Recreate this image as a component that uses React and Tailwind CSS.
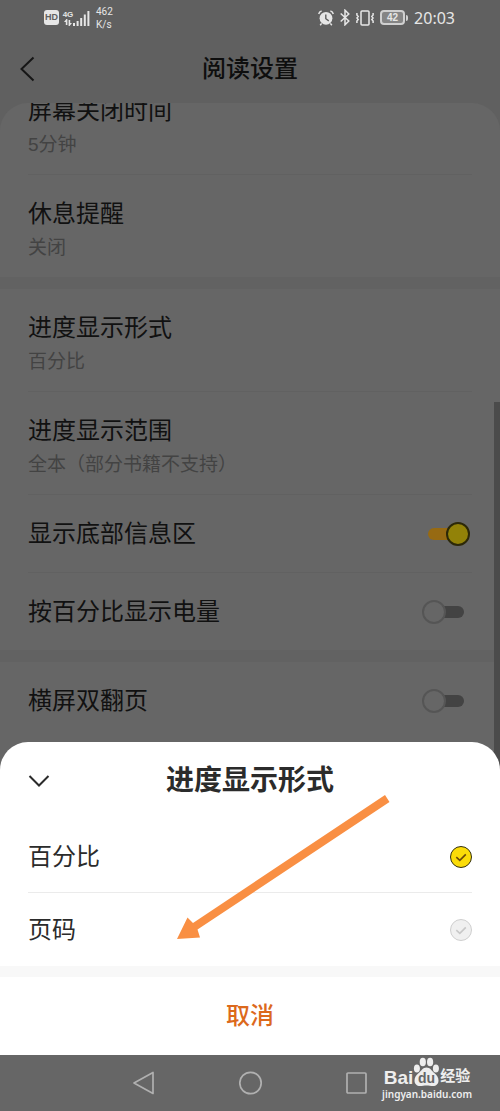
import React, { useState } from 'react';

const Divider = ({ thick }) => (
    <div className={thick ? 'h-3 bg-[#626262]' : 'mx-7 h-px bg-[#616161]'} />
);

const SettingLink = ({ title, value }) => (
    <button type="button" className="block w-full px-7 pt-[23px] pb-3 text-left">
        <span className="block text-2xl leading-8 text-[#111111]">{title}</span>
        <span className="block text-[19px] leading-[35px] text-[#434343]">{value}</span>
    </button>
);

const SettingSwitch = ({ title, defaultChecked = false }) => (
    <label className="flex h-[77px] items-center justify-between pl-7 pr-[30px]">
        <span className="text-2xl leading-8 text-[#111111]">{title}</span>
        <input
            type="checkbox"
            role="switch"
            defaultChecked={defaultChecked}
            className="relative h-6 w-12 appearance-none before:absolute before:inset-x-1.5 before:top-1.5 before:h-3 before:rounded-full before:bg-[#434343] after:absolute after:left-0 after:top-0 after:h-6 after:w-6 after:rounded-full after:border-2 after:border-[#555555] after:bg-[#666666] checked:before:bg-[#976a12] checked:after:left-6 checked:after:border-[#2c2808] checked:after:bg-[#928208]"
        />
    </label>
);

const Option = ({ label, checked, onChange }) => (
    <label className="flex h-[73px] items-center justify-between">
        <span className="text-2xl leading-8 text-[#2b2b2b]">{label}</span>
        <span className="grid h-[22px] w-[22px]">
            <input
                type="radio"
                name="progress"
                checked={checked}
                onChange={onChange}
                className="col-start-1 row-start-1 h-[22px] w-[22px] appearance-none rounded-full border border-[#cfcfcf] bg-[#f0f0f0] checked:border-[#33300f] checked:bg-[#fbdc08]"
            />
            <svg viewBox="0 0 22 22" className={`pointer-events-none col-start-1 row-start-1 ${checked ? 'text-[#6b4a0a]' : 'text-[#c8c8c8]'}`} fill="none" stroke="currentColor" strokeWidth="1.6">
                <path d="M6.3 11.2 9.8 14.4 15.8 8.4" />
            </svg>
        </span>
    </label>
);

const StatusBar = () => (
    <div className="flex h-[35px] items-center justify-between pl-11 pr-[45px] text-[#e6e6e6]">
        <div className="flex items-center">
            <span className="flex h-[15px] w-[15px] items-center justify-center rounded-[3px] bg-[#e6e6e6] text-[9px] font-bold text-[#606060]">HD</span>
            <div className="ml-1 flex items-end">
                <div className="flex w-[10px] flex-col items-center">
                    <span className="text-[8px] font-bold leading-[9px]">4G</span>
                    <svg width="8" height="7" viewBox="0 0 8 7" fill="currentColor">
                        <path d="M0 3 2.4 0H3.4V6H1.8V3ZM8 4 5.6 7H4.6V1H6.2V4Z" />
                    </svg>
                </div>
                <svg width="17" height="16" viewBox="0 0 17 16" fill="currentColor">
                    <path d="M0 13h2v3H0zM3.6 11h2v5h-2zM7.2 8h2v8h-2zM10.8 4.5h2V16h-2zM14.4 1h2v15h-2z" />
                </svg>
            </div>
            <div className="ml-1.5 font-['Roboto'] text-[10px] leading-[13px]">
                <div>462</div>
                <div>K/s</div>
            </div>
        </div>
        <div className="flex items-center">
            <svg width="16" height="16" viewBox="0 0 16 16">
                <circle cx="8" cy="8.3" r="6.4" fill="currentColor" />
                <path d="M.7 4A4 4 0 0 1 3.6 1M15.3 4a4 4 0 0 0-2.9-3M3.6 13.4 2.2 15.2M12.4 13.4l1.4 1.8" stroke="currentColor" strokeWidth="1.5" fill="none" />
                <path d="M7.8 4.5v4.2l3 2.2" stroke="#606060" strokeWidth="1.4" fill="none" />
            </svg>
            <svg className="ml-1.5" width="10" height="17" viewBox="0 0 10 17" fill="none" stroke="currentColor" strokeWidth="1.5">
                <path d="M.7 4.5 8.8 12 5 15.8V1.2L8.8 5 .7 12.5" />
            </svg>
            <svg className="ml-1.5" width="18" height="16" viewBox="0 0 18 16" fill="none" stroke="currentColor" strokeWidth="1.5">
                <rect x="5" y="1" width="8" height="14" rx="1" />
                <path d="M.9 3v2l1.300 1.500L.9 8l1.300 1.500L.9 11v2M17.100 3v2l-1.300 1.500L17.100 8l-1.300 1.500 1.300 1.500v2" />
            </svg>
            <div className="ml-1.5 flex h-[15px] w-[25px] items-center justify-center rounded-[4px] border-2 border-[#d0d0d0] bg-[#858585] text-[10px] font-bold leading-none">42</div>
            <div className="ml-px h-1.5 w-[2px] rounded-r bg-[#d0d0d0]" />
            <time className="ml-1.5 font-['Noto_Sans'] text-base leading-5">20:03</time>
        </div>
    </div>
);

const Watermark = () => (
    <div className="absolute right-7 top-0.5 flex flex-col items-center text-[#eeeeee]">
        <div className="flex h-[30px] items-end">
            <span className="text-[19px] font-bold leading-[18px]">Bai</span>
            <svg className="h-[30px] w-[27px]" viewBox="0 0 26 30" fill="currentColor">
                <ellipse cx="9.3" cy="5" rx="3.1" ry="4.300" />
                <ellipse cx="16.6" cy="5" rx="3.1" ry="4.300" />
                <ellipse cx="3.4" cy="11.5" rx="3" ry="3.900" />
                <ellipse cx="22.4" cy="11.5" rx="3" ry="3.900" />
                <path d="M13 10.500c3.600 0 5 3.200 7.500 5.300 2.800 2.300 4.500 4.400 4.500 7.700 0 3.600-2.400 5.500-5.500 5.500-2.300 0-4.200-.6-6.500-.6s-4.200.6-6.500.6C3.400 29 1 27.100 1 23.500c0-3.300 1.700-5.400 4.500-7.700C8 13.700 9.400 10.500 13 10.500Z" />
                <text x="13" y="26" textAnchor="middle" fontSize="14" fontWeight="700" fill="#666666">du</text>
            </svg>
            <span className="text-[15px] font-bold leading-[22px]">经验</span>
        </div>
        <span className="font-['Noto_Sans'] text-[10px] font-semibold leading-[14px]">jingyan.baidu.com</span>
    </div>
);

const App = () => {
    const [mode, setMode] = useState('percent');

    return (
        <div className="relative flex min-h-screen flex-col justify-between overflow-hidden bg-[#666666] font-['Liberation_Sans','Noto_Sans_CJK_SC',sans-serif]">
            {/* Dimmed settings page behind the sheet */}
            <div className="bg-[#606060]">
                <StatusBar />
                <header className="grid h-[68px] grid-cols-[1fr_auto_1fr] items-center px-5">
                    <button type="button" aria-label="返回" className="justify-self-start">
                        <svg width="15" height="26" viewBox="0 0 15 26" fill="none" stroke="#161616" strokeWidth="2">
                            <path d="M13.500 1.500 1.500 13 13.500 24.500" />
                        </svg>
                    </button>
                    <h1 className="text-2xl font-medium leading-8 text-[#0e0e0e]">阅读设置</h1>
                </header>
                <main className="overflow-hidden rounded-t-[28px] bg-[#666666]">
                    <div className="-mt-[31px]">
                        <SettingLink title="屏幕关闭时间" value="5分钟" />
                        <Divider />
                        <SettingLink title="休息提醒" value="关闭" />
                        <Divider thick />
                        <SettingLink title="进度显示形式" value="百分比" />
                        <Divider />
                        <SettingLink title="进度显示范围" value="全本（部分书籍不支持）" />
                        <Divider />
                        <SettingSwitch title="显示底部信息区" defaultChecked />
                        <Divider />
                        <SettingSwitch title="按百分比显示电量" />
                        <Divider thick />
                        <SettingSwitch title="横屏双翻页" />
                    </div>
                </main>
            </div>
            <div className="absolute right-0 top-[402px] h-[380px] w-1.5 bg-[#4b4b4b]" />

            <div className="relative -mt-1">
                <section className="relative rounded-t-[28px] bg-white">
                    <header className="grid h-[78px] grid-cols-[1fr_auto_1fr] items-center px-7">
                        <button type="button" aria-label="收起" className="justify-self-start">
                            <svg width="22" height="14" viewBox="0 0 22 14" fill="none" stroke="#2b2b2b" strokeWidth="2">
                                <path d="M1.500 2 11 11.500 20.500 2" />
                            </svg>
                        </button>
                        <h2 className="text-[28px] font-bold leading-9 text-[#2b2b2b]">进度显示形式</h2>
                    </header>
                    <div className="px-7">
                        <Option label="百分比" checked={mode === 'percent'} onChange={() => setMode('percent')} />
                        <div className="-mt-px h-px bg-[#ebebeb]" />
                        <Option label="页码" checked={mode === 'page'} onChange={() => setMode('page')} />
                    </div>
                    <div className="h-[11px] bg-[#f8f8f8]" />
                    <button type="button" className="block h-[78px] w-full text-2xl font-medium text-[#dc691c]">取消</button>

                    {/* Pointer to the second option */}
                    <svg className="pointer-events-none absolute left-[177px] top-[52px]" width="214" height="146" viewBox="0 0 214 146" fill="#f98f43">
                        <path d="M208 1 212.500 8 20.500 135.500 23 143.500 0 145 10.500 123.500 16 129Z" />
                    </svg>
                </section>

                <nav className="relative flex h-14 items-center justify-center gap-[83px] bg-[#666666]">
                    <button type="button" aria-label="后退">
                        <svg width="23" height="24" viewBox="0 0 23 24" fill="none" stroke="#b0b0b0" strokeWidth="1.700" strokeLinejoin="round">
                            <path d="M20 1.500v21L1 12Z" />
                        </svg>
                    </button>
                    <button type="button" aria-label="主页">
                        <svg width="24" height="24" viewBox="0 0 24 24" fill="none" stroke="#b0b0b0" strokeWidth="1.700">
                            <circle cx="11.500" cy="12" r="10.700" />
                        </svg>
                    </button>
                    <button type="button" aria-label="最近任务">
                        <svg width="22" height="24" viewBox="0 0 22 24" fill="none" stroke="#b0b0b0" strokeWidth="1.700">
                            <rect x="1" y="2" width="19" height="20" rx="1" />
                        </svg>
                    </button>
                    <Watermark />
                </nav>
            </div>
        </div>
    );
};

export default App;
